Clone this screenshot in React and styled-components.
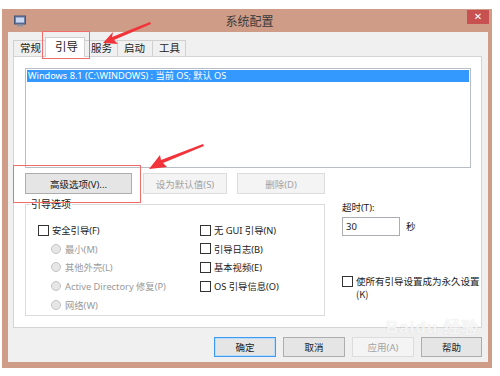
import React from "react";
import styled, { createGlobalStyle, css } from "styled-components";

const GlobalStyle = createGlobalStyle`
  html, body {
    margin: 0;
    padding: 0;
    background: #ffffff;
    width: 500px;
    height: 376px;
    overflow: hidden;
  }
  body {
    font-family: "Noto Sans", "Noto Sans CJK SC", sans-serif;
    font-size: 10px;
    color: #1a1a1a;
  }
`;

const Page = styled.div`
  position: relative;
  width: 500px;
  height: 376px;
  padding: 9px 0 0 2px;
  box-sizing: border-box;
`;

const Window = styled.div`
  width: 490px;
  height: 359px;
  background: #cf9c87;
  box-sizing: border-box;
  padding: 0 4px 6px 6px;
  display: flex;
  flex-direction: column;
`;

const TitleBar = styled.div`
  height: 23px;
  display: flex;
  align-items: center;
  flex-shrink: 0;
`;

const TitleText = styled.div`
  flex: 1;
  text-align: center;
  font-family: "Noto Sans CJK SC", sans-serif;
  font-size: 12px;
  color: #3a3a3a;
  padding-left: 6px;
`;

const CloseButton = styled.div`
  width: 22px;
  height: 14px;
  margin-top: -8px;
  margin-right: -1px;
  background: #c75050;
  color: #fff;
  font-size: 10px;
  font-weight: bold;
  display: flex;
  align-items: center;
  justify-content: center;
  font-family: "DejaVu Sans", sans-serif;
`;

const Client = styled.div`
  flex: 1;
  background: #f0f0f0;
  display: flex;
  flex-direction: column;
  padding: 5px 6px 0 5px;
`;

const TabRow = styled.div`
  display: flex;
  align-items: flex-end;
  height: 19px;
  padding-left: 1px;
`;

const Tab = styled.div`
  width: ${(p) => p.$w}px;
  height: 16px;
  box-sizing: border-box;
  border: 1px solid #d0d0d0;
  border-bottom: none;
  margin-left: -1px;
  background: #f0f0f0;
  font-family: "Noto Sans CJK SC", sans-serif;
  font-size: 10.5px;
  line-height: 14px;
  padding-left: 6px;
  color: #222;
  ${(p) =>
    p.$active &&
    css`
      height: 20px;
      margin-bottom: -1px;
      background: #ffffff;
      position: relative;
      z-index: 1;
      padding-left: 9px;
      line-height: 17px;
      font-size: 11.5px;
    `}
`;

const Panel = styled.div`
  height: 272px;
  box-sizing: border-box;
  border: 1px solid #d4d4d4;
  background: #ffffff;
  padding: 11px 10px 0 11px;
  display: flex;
  flex-direction: column;
`;

const ListBox = styled.div`
  width: 446px;
  height: 100px;
  box-sizing: border-box;
  border: 1px solid #b8bcc4;
  padding: 1px;
`;

const ListItem = styled.div`
  height: 12px;
  background: #3399ff;
  color: #ffffff;
  font-size: 9.2px;
  line-height: 12px;
  padding-left: 1px;
  white-space: nowrap;
`;

const ButtonRow = styled.div`
  display: flex;
  gap: ${(p) => p.$gap || 10}px;
  margin-top: ${(p) => p.$top || 0}px;
  justify-content: ${(p) => (p.$end ? "flex-end" : "flex-start")};
`;

const Button = styled.div`
  width: ${(p) => p.$w}px;
  height: ${(p) => p.$h || 21}px;
  box-sizing: border-box;
  border: 1px solid #adadad;
  background: #e5e5e5;
  display: flex;
  align-items: center;
  justify-content: center;
  font-family: "Noto Sans", "Noto Sans CJK SC", sans-serif;
  font-size: 9.5px;
  color: #1a1a1a;
  margin-left: ${(p) => p.$ml || 0}px;
  ${(p) =>
    p.$disabled &&
    css`
      border-color: #dcdcdc;
      background: #f4f4f4;
      color: #a3a3a3;
    `}
  ${(p) =>
    p.$default &&
    css`
      border: 1px solid #3c9bf0;
      box-shadow: inset 0 0 0 1px #b9dcfb;
    `}
`;

const Lower = styled.div`
  display: flex;
  margin-top: 4px;
`;

const GroupBox = styled.fieldset`
  width: 300px;
  height: 118px;
  flex-shrink: 0;
  box-sizing: border-box;
  margin: 0;
  border: 1px solid #dcdcdc;
  padding: 11px 0 0 12px;
  display: grid;
  grid-template-columns: 162px 1fr;
  grid-auto-rows: 18.6px;
  align-content: start;
`;

const Legend = styled.legend`
  font-family: "Noto Sans CJK SC", sans-serif;
  font-size: 10px;
  padding: 0 1px;
  margin-left: -8px;
  line-height: 12px;
  color: #1a1a1a;
`;

const Option = styled.div`
  display: flex;
  align-items: center;
  gap: 2px;
  font-family: "Noto Sans", "Noto Sans CJK SC", sans-serif;
  font-size: 9.3px;
  white-space: nowrap;
  padding-left: ${(p) => p.$indent || 0}px;
  color: ${(p) => (p.$disabled ? "#9a9a9a" : "#1a1a1a")};
  grid-column: ${(p) => p.$col};
`;

const Check = styled.span`
  width: 11px;
  height: 11px;
  box-sizing: border-box;
  border: 1px solid #333;
  background: #fff;
  flex-shrink: 0;
  margin-right: 1px;
`;

const Radio = styled.span`
  width: 10px;
  height: 10px;
  box-sizing: border-box;
  border-radius: 50%;
  border: 1px solid #c4c4c4;
  background: #e6e6e6;
  flex-shrink: 0;
  margin-right: 2px;
`;

const RightCol = styled.div`
  margin-left: 17px;
  padding-top: 4px;
  display: flex;
  flex-direction: column;
  flex: 1;
  min-width: 0;
`;

const Label = styled.div`
  font-family: "Noto Sans", "Noto Sans CJK SC", sans-serif;
  font-size: 9.5px;
  line-height: 12px;
`;

const InputRow = styled.div`
  display: flex;
  align-items: center;
  gap: 6px;
  margin-top: 3px;
`;

const Input = styled.div`
  width: 58px;
  height: 19px;
  box-sizing: border-box;
  border: 1px solid #abadb3;
  font-size: 9.5px;
  line-height: 17px;
  padding-left: 3px;
`;

const Permanent = styled.div`
  display: flex;
  align-items: flex-start;
  gap: 2px;
  margin-top: 39px;
  font-family: "Noto Sans CJK SC", sans-serif;
  font-size: 9.5px;
  line-height: 13px;
  white-space: nowrap;
  & > span:first-child {
    margin-top: 1px;
  }
`;

const RedBox = styled.div`
  position: absolute;
  border: 1px solid #f26c6c;
  pointer-events: none;
`;

const Overlay = styled.svg`
  position: absolute;
  left: 0;
  top: 0;
  pointer-events: none;
`;

const Watermark = styled.div`
  position: absolute;
  left: 386px;
  top: 316px;
  color: rgba(255, 255, 255, 0.8);
  font-family: "Liberation Sans", sans-serif;
  font-size: 17px;
  font-weight: bold;
  letter-spacing: 1px;
  text-shadow: 0 0 1px rgba(150, 150, 150, 0.35);
  pointer-events: none;
`;

const tabs = [
  { name: "常规", w: 33 },
  { name: "引导", w: 40, active: true },
  { name: "服务", w: 34 },
  { name: "启动", w: 36 },
  { name: "工具", w: 34 },
];

export default function App() {
  return (
    <Page>
      <GlobalStyle />
      <Window>
        <TitleBar>
          <svg width="12" height="12" viewBox="0 0 12 12" style={{ marginLeft: 6 }}>
            <rect x="0.5" y="1" width="11" height="8" fill="#6a7fa8" stroke="#44557a" />
            <rect x="2" y="2.5" width="8" height="5" fill="#c9d6ee" />
            <rect x="3" y="9.5" width="6" height="2" fill="#8a93a6" />
          </svg>
          <TitleText>系统配置</TitleText>
          <CloseButton>✕</CloseButton>
        </TitleBar>
        <Client>
          <TabRow>
            {tabs.map((t) => (
              <Tab key={t.name} $w={t.w} $active={t.active}>
                {t.name}
              </Tab>
            ))}
          </TabRow>
          <Panel>
            <ListBox>
              <ListItem>Windows 8.1 (C:\WINDOWS) : 当前 OS; 默认 OS</ListItem>
            </ListBox>
            <ButtonRow $top={5} $gap={10}>
              <Button $w={107}>高级选项(V)...</Button>
              <Button $w={84} $ml={1} $disabled>设为默认值(S)</Button>
              <Button $w={88} $disabled>删除(D)</Button>
            </ButtonRow>
            <Lower>
              <GroupBox>
                <Legend>引导选项</Legend>
                <Option $col={1}><Check />安全引导(F)</Option>
                <Option $col={2}><Check />无 GUI 引导(N)</Option>
                <Option $col={1} $indent={13} $disabled><Radio />最小(M)</Option>
                <Option $col={2}><Check />引导日志(B)</Option>
                <Option $col={1} $indent={13} $disabled><Radio />其他外壳(L)</Option>
                <Option $col={2}><Check />基本视频(E)</Option>
                <Option $col={1} $indent={13} $disabled><Radio />Active Directory 修复(P)</Option>
                <Option $col={2}><Check />OS 引导信息(O)</Option>
                <Option $col={1} $indent={13} $disabled><Radio />网络(W)</Option>
              </GroupBox>
              <RightCol>
                <Label>超时(T):</Label>
                <InputRow>
                  <Input>30</Input>
                  <Label>秒</Label>
                </InputRow>
                <Permanent>
                  <Check />
                  <span>
                    使所有引导设置成为永久设置
                    <br />
                    (K)
                  </span>
                </Permanent>
              </RightCol>
            </Lower>
          </Panel>
          <ButtonRow $top={9} $gap={7} $end>
            <Button $w={62} $h={20} $default>确定</Button>
            <Button $w={62} $h={20}>取消</Button>
            <Button $w={62} $h={20} $disabled>应用(A)</Button>
            <Button $w={61} $h={20}>帮助</Button>
          </ButtonRow>
        </Client>
      </Window>

      <RedBox style={{ left: 42, top: 31, width: 46, height: 26 }} />
      <RedBox style={{ left: 13, top: 165, width: 126, height: 36 }} />
      <Watermark>Baidu 经验</Watermark>
      <Overlay width="500" height="376" viewBox="0 0 500 376">
        <polygon points="103,43 113,32 112,37 150,22 151,24 114,40 118,44" fill="#f2333a" />
        <polygon points="149,169 160,155 161,160 203,144 204,146 163,163 167,167" fill="#f2333a" />
      </Overlay>
    </Page>
  );
}
